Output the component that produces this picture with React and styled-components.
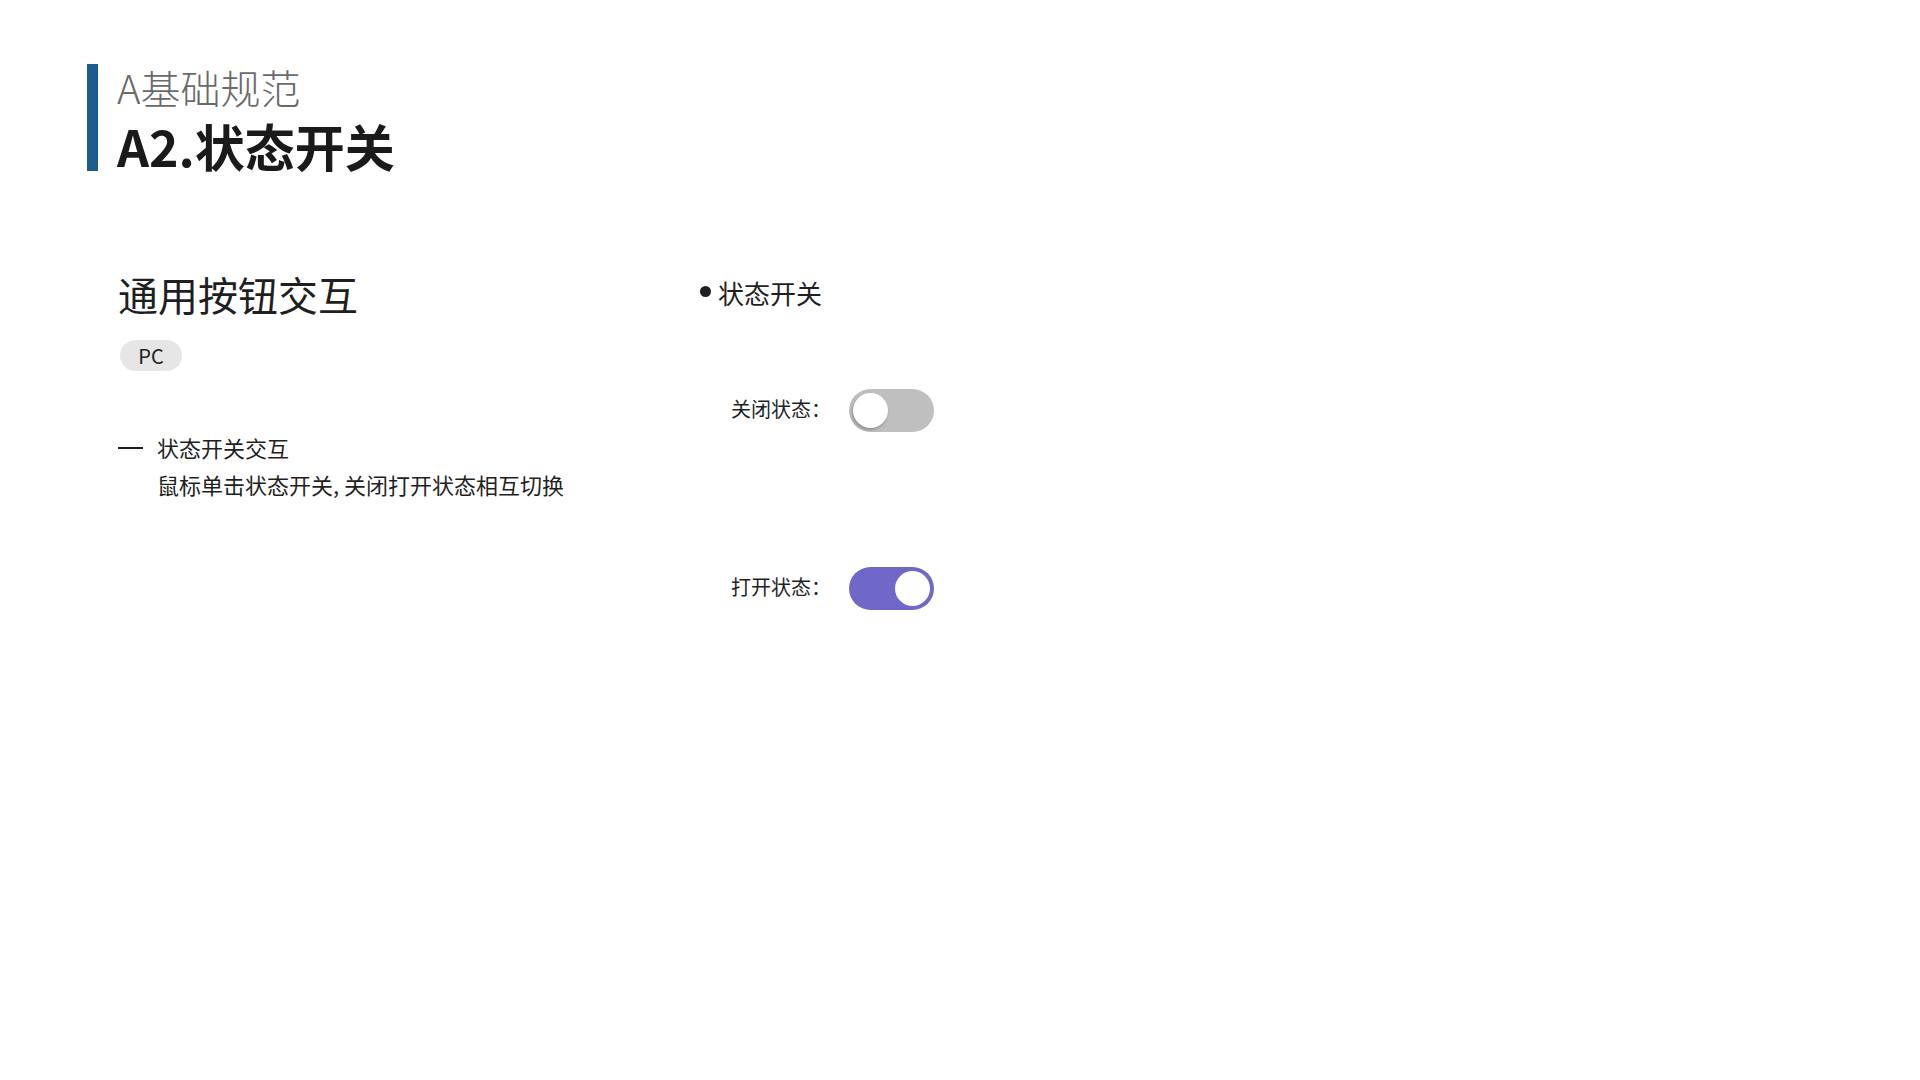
import React, { useState } from 'react';
import styled, { createGlobalStyle } from 'styled-components';

const GlobalStyle = createGlobalStyle`
    html, body {
        margin: 0;
        padding: 0;
        background: #ffffff;
    }
    body {
        font-family: "Noto Sans CJK SC", "Noto Sans", sans-serif;
        color: #1f1f1f;
    }
`;

const Page = styled.div`
    width: 1920px;
    min-height: 1080px;
    box-sizing: border-box;
    padding-top: 59px;
`;

const Header = styled.header`
    display: flex;
    align-items: center;
    gap: 19px;
    padding-left: 87px;
`;

const AccentBar = styled.div`
    width: 11px;
    height: 107px;
    background: #1d5b8f;
`;

const TitleGroup = styled.div`
    display: flex;
    flex-direction: column;
`;

const Category = styled.div`
    font-size: 40px;
    line-height: 56px;
    font-weight: 300;
    color: #6a6a6a;
`;

const PageTitle = styled.h1`
    margin: 0;
    font-size: 50px;
    line-height: 60px;
    font-weight: 700;
    color: #1a1a1a;
`;

const Body = styled.main`
    display: grid;
    grid-template-columns: 582px auto;
    padding-left: 118px;
    margin-top: 91px;
`;

const LeftColumn = styled.section`
    display: flex;
    flex-direction: column;
    align-items: flex-start;
`;

const SectionTitle = styled.h2`
    margin: 0;
    font-size: 40px;
    line-height: 56px;
    font-weight: 400;
    color: #1f1f1f;
`;

const Tag = styled.span`
    margin: 18px 0 0 2px;
    width: 62px;
    height: 31px;
    border-radius: 16px;
    background: #e6e6e6;
    display: flex;
    align-items: center;
    justify-content: center;
    font-size: 20px;
    color: #222;
`;

const Note = styled.div`
    margin-top: 58px;
    font-size: 22px;
    line-height: 37px;
    color: #1f1f1f;
`;

const NoteHead = styled.div`
    display: flex;
    align-items: center;
`;

const Dash = styled.span`
    width: 25px;
    height: 2px;
    margin-right: 14px;
    background: #1f1f1f;
    flex-shrink: 0;
`;

const NoteText = styled.div`
    padding-left: 39px;
`;

const RightColumn = styled.section`
    display: flex;
    flex-direction: column;
    padding-top: 9px;
`;

const Bullet = styled.h3`
    margin: 0;
    display: flex;
    align-items: center;
    gap: 7px;
    font-size: 26px;
    line-height: 36px;
    font-weight: 400;
    color: #1f1f1f;

    &::before {
        content: '';
        width: 11px;
        height: 11px;
        border-radius: 50%;
        background: #1f1f1f;
        margin-top: -4px;
    }
`;

const SwitchRow = styled.div`
    display: flex;
    align-items: center;
    padding-left: 31px;
    margin-top: ${(p) => p.$top}px;
`;

const Label = styled.span`
    width: 118px;
    font-size: 20px;
    padding-bottom: 5px;
    color: #1f1f1f;
`;

const Track = styled.button`
    position: relative;
    width: 85px;
    height: 43px;
    border: none;
    padding: 0;
    border-radius: 22px;
    cursor: pointer;
    background: ${(p) => (p.$on ? '#7068c9' : '#bfbfbf')};
`;

const Knob = styled.span`
    position: absolute;
    top: 4px;
    left: ${(p) => (p.$on ? '46px' : '4px')};
    width: 35px;
    height: 35px;
    border-radius: 50%;
    background: #ffffff;
    box-shadow: ${(p) => (p.$on ? 'none' : '-1px 2px 3px rgba(0, 0, 0, 0.25)')};
`;

const Switch = ({ initial }) => {
    const [on, setOn] = useState(initial);
    return (
        <Track $on={on} onClick={() => setOn(!on)}>
            <Knob $on={on} />
        </Track>
    );
};

const App = () => {
    return (
        <Page>
            <GlobalStyle />
            <Header>
                <AccentBar />
                <TitleGroup>
                    <Category>A基础规范</Category>
                    <PageTitle>A2.状态开关</PageTitle>
                </TitleGroup>
            </Header>
            <Body>
                <LeftColumn>
                    <SectionTitle>通用按钮交互</SectionTitle>
                    <Tag>PC</Tag>
                    <Note>
                        <NoteHead>
                            <Dash />
                            <span>状态开关交互</span>
                        </NoteHead>
                        <NoteText>鼠标单击状态开关, 关闭打开状态相互切换</NoteText>
                    </Note>
                </LeftColumn>
                <RightColumn>
                    <Bullet>状态开关</Bullet>
                    <SwitchRow $top={78}>
                        <Label>关闭状态：</Label>
                        <Switch initial={false} />
                    </SwitchRow>
                    <SwitchRow $top={135}>
                        <Label>打开状态：</Label>
                        <Switch initial={true} />
                    </SwitchRow>
                </RightColumn>
            </Body>
        </Page>
    );
};

export default App;
